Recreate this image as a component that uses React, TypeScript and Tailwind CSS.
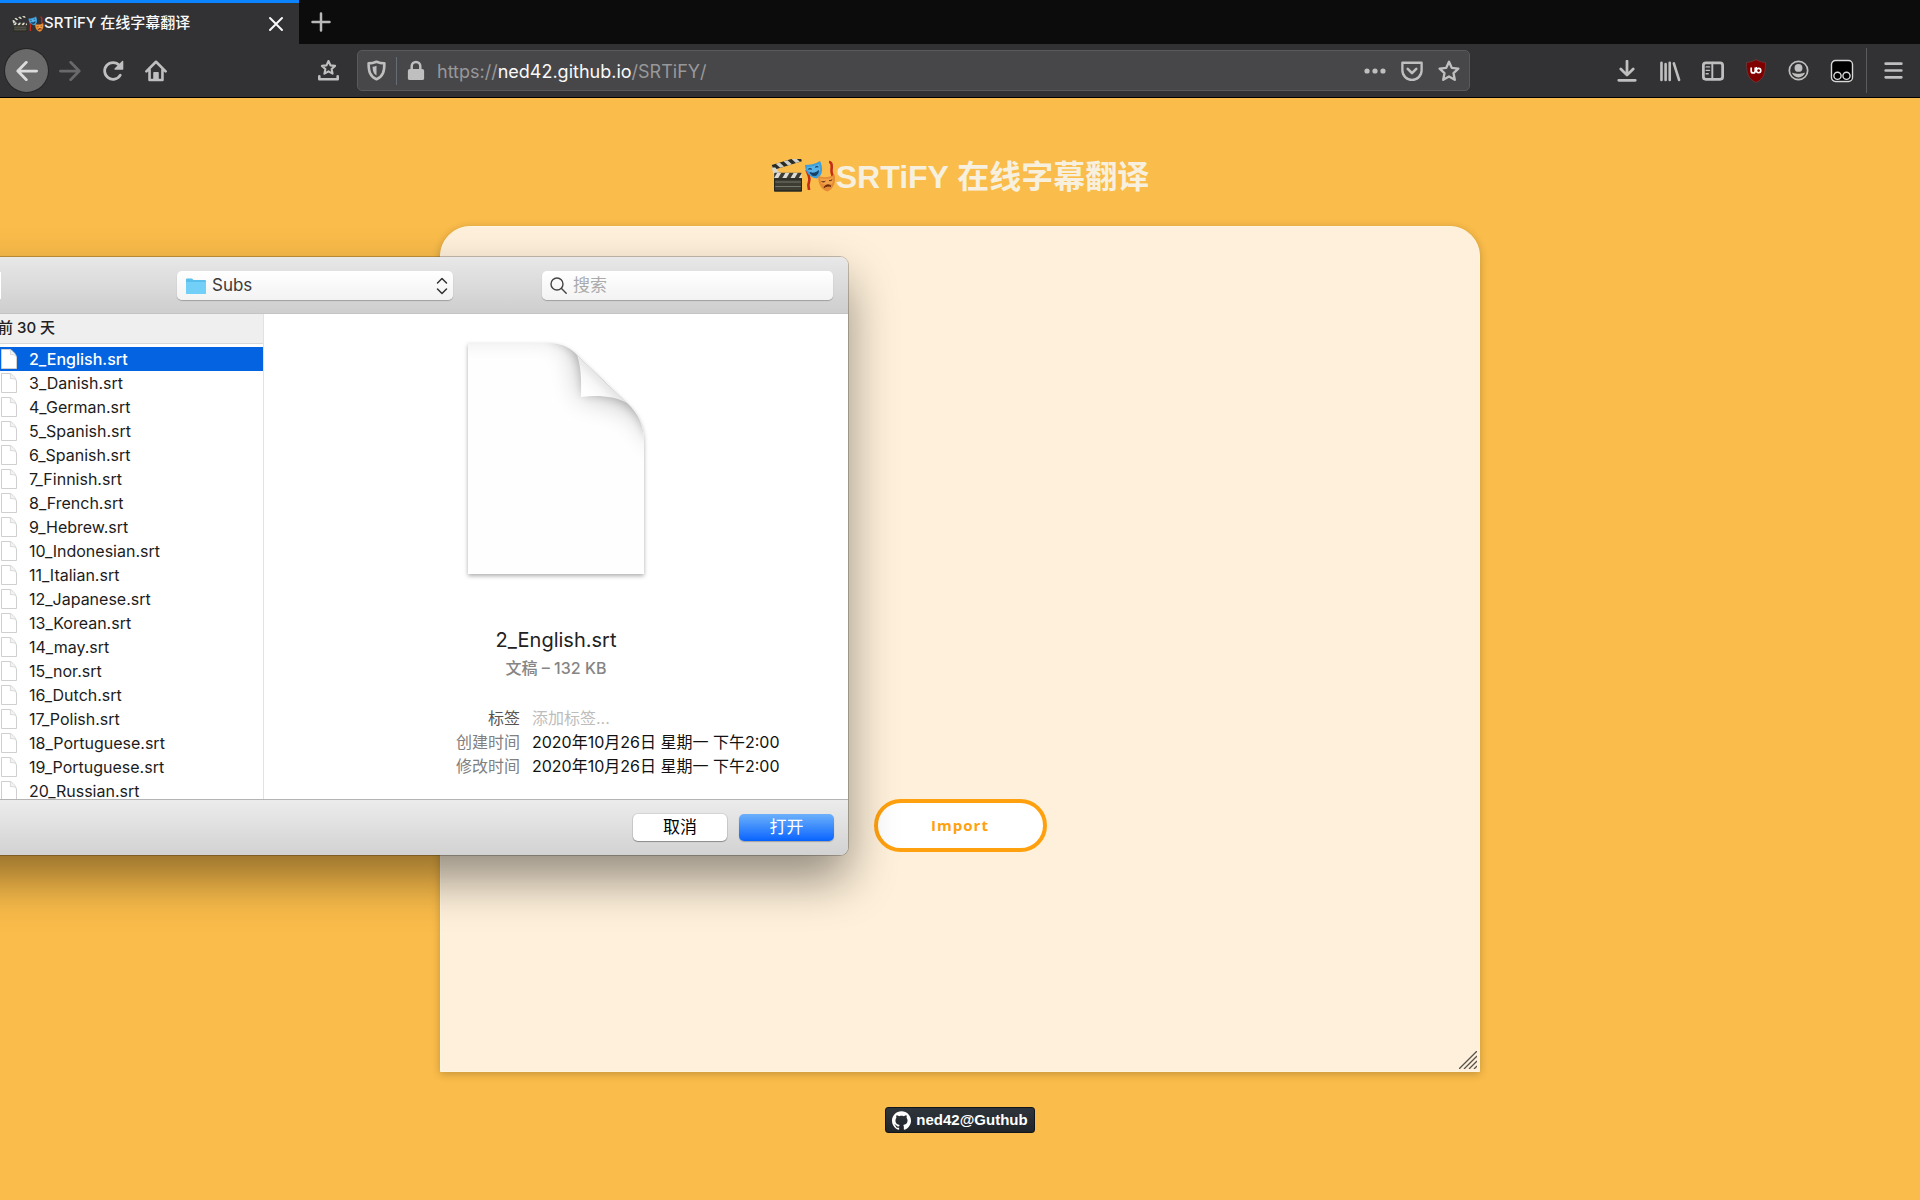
import React from "react";
import { SiGithub } from "react-icons/si";

const FILES = [
  "2_English.srt",
  "3_Danish.srt",
  "4_German.srt",
  "5_Spanish.srt",
  "6_Spanish.srt",
  "7_Finnish.srt",
  "8_French.srt",
  "9_Hebrew.srt",
  "10_Indonesian.srt",
  "11_Italian.srt",
  "12_Japanese.srt",
  "13_Korean.srt",
  "14_may.srt",
  "15_nor.srt",
  "16_Dutch.srt",
  "17_Polish.srt",
  "18_Portuguese.srt",
  "19_Portuguese.srt",
  "20_Russian.srt",
];

function ClapperIcon({ className }: { className: string }) {
  return (
    <svg viewBox="0 0 32 32" className={className} aria-hidden="true">
      <g transform="rotate(-17 2 10)">
        <rect x="2" y="5.6" width="29" height="5" fill="#2b2b26" />
        <path d="M6 5.6h4l3 5H9zM14 5.6h4l3 5h-4zM22 5.6h4l3 5h-4zM2 7l2 3.6H2z" fill="#cfcfc6" />
      </g>
      <path d="M1 9l3-1 4 5-5 4z" fill="#d9d9d2" />
      <rect x="3" y="13.4" width="27" height="18" rx="1" fill="#3d3d34" />
      <path d="M3 18.4l3-5h4l-3 5zM11 18.4l3-5h4l-3 5zM19 18.4l3-5h4l-3 5zM27 18.4l3-5v5z" fill="#dcdcd4" />
      <path d="M4 22.4h25M4 26.6h25" stroke="#77776d" strokeWidth="1" />
      <path d="M3.500 19.400h26v11.500h-26z" fill="none" stroke="#25251f" />
    </svg>
  );
}

function MasksIcon({ className }: { className: string }) {
  return (
    <svg viewBox="0 0 32 32" className={className} aria-hidden="true">
      <path d="M2.500 10c2 5 4 8 2.500 12s0 5 0 8" fill="none" stroke="#c32d17" strokeWidth="2.600" />
      <path d="M25 2c3 0 3 4 2.500 8s2 6 1.500 9" fill="none" stroke="#c32d17" strokeWidth="2.600" />
      <path d="M1 5c5 0 10-1 15-4 3 6 3.500 14-3 17.500C6 18 1 12 1 5z" fill="#3f9fdc" />
      <path d="M3 7c4 0 8-1 12-3 1 3 1.500 5 1 7-5 3-9 2-12 0z" fill="#66c0ef" opacity=".6" />
      <path d="M4 9.500c1-1.500 3-1.500 4 0M11 7.500c1-1.500 3-1.500 3.500-.3M6 12.500c3 1.300 6 .5 8.500-2-.2 3.500-2 5.200-4 5.200S6.600 14.500 6 12.500z" fill="#163f63" stroke="#163f63" strokeWidth=".8" />
      <path d="M14.500 16c5 2 11 1.500 16-1.500 1.500 7-.5 14.500-7 17-6-1.500-10-8-9-15.500z" fill="#e58a35" />
      <path d="M16 18c5 1.500 9 1 13-1 .5 3 0 5-1 7-5 1-8 1-11-1z" fill="#f7ad53" opacity=".7" />
      <path d="M17.500 21.500c1.500.8 2.800.6 3.800-.4M25 20.500c1.200.4 2.600 0 3.300-1M20 27.500c1.500-3 5-3.500 7-1.200-2-.5-5-.1-7 1.200z" fill="#6b2c0c" stroke="#6b2c0c" strokeWidth="1" />
    </svg>
  );
}

function IconButton({ label, children, className = "" }: { label: string; children: React.ReactNode; className?: string }) {
  return (
    <button type="button" aria-label={label} className={`flex h-[43px] w-[43px] shrink-0 items-center justify-center ${className}`}>
      {children}
    </button>
  );
}

/* 16-unit glyph drawn at 21px */
function Glyph({ children, size = "size-[21px]" }: { children: React.ReactNode; size?: string }) {
  return (
    <svg viewBox="0 0 16 16" className={size} fill="none" stroke="currentColor" strokeWidth="2" strokeLinecap="round" strokeLinejoin="round" aria-hidden="true">
      {children}
    </svg>
  );
}

const STAR = "M8 1.300l2 4.400 4.800.6-3.500 3.300.9 4.800L8 12l-4.200 2.400.9-4.800L1.200 6.300 6 5.700z";

function BrowserChrome() {
  return (
    <header className="font-[Inter,'Noto_Sans_CJK_SC',sans-serif]">
      <div className="flex h-[44px] bg-[#0c0c0d]">
        <div className="flex w-[299px] items-center border-t-[3px] border-[#0a84ff] bg-[#323234] pl-3 pr-[15px] text-[#f9f9fa]">
          <ClapperIcon className="size-4" />
          <MasksIcon className="size-4" />
          <span className="flex-1 text-[15px] font-medium">SRTiFY 在线字幕翻译</span>
          <button type="button" aria-label="关闭标签页">
            <svg viewBox="0 0 16 16" className="size-4" stroke="currentColor" strokeWidth="2" strokeLinecap="round" aria-hidden="true">
              <path d="M2 2l12 12M14 2L2 14" />
            </svg>
          </button>
        </div>
        <button type="button" aria-label="新建标签页" className="flex w-[44px] items-center justify-center text-[#b9b9ba]">
          <svg viewBox="0 0 20 20" className="size-5" stroke="currentColor" strokeWidth="2.500" strokeLinecap="round" aria-hidden="true">
            <path d="M10 1.500v17M1.500 10h17" />
          </svg>
        </button>
      </div>

      <div className="flex h-[54px] items-center border-b border-black bg-[#323234] text-[#bfbfc0]">
        <nav aria-label="导航" className="flex w-[350px] shrink-0 pl-[5px]">
          <IconButton label="后退" className="rounded-full bg-[#6a6a6b] text-[#dcdcdc] ring-1 ring-[#252526]">
            <Glyph size="size-[22px]"><path d="M15 8H1.500M7.500 1.700L1.300 8l6.200 6.300" /></Glyph>
          </IconButton>
          <IconButton label="前进" className="text-[#69696b]">
            <Glyph size="size-[22px]"><path d="M1 8h13.500M8.500 1.700L14.700 8l-6.200 6.300" /></Glyph>
          </IconButton>
          <IconButton label="刷新">
            <Glyph size="size-[22px]">
              <path d="M13.300 11A6.100 6.100 0 1 1 12.600 3.900" />
              <path d="M15 1v5.500H9.500z" fill="currentColor" strokeWidth="1" />
            </Glyph>
          </IconButton>
          <IconButton label="主页">
            <Glyph size="size-[22px]">
              <path d="M1 8.300L8 1.300l7 7M3.300 7v7.500h9.400V7" strokeWidth="1.900" />
              <path d="M6.500 14V9.300h3V14z" fill="currentColor" strokeWidth="1" />
            </Glyph>
          </IconButton>
          <IconButton label="书签" className="ml-auto">
            <Glyph>
              <path d="M8 .8l1.500 3.300 3.500.4-2.600 2.400.7 3.500L8 8.700l-3.100 1.700.7-3.500L3 4.500l3.500-.4z" strokeWidth="1.600" />
              <path d="M1 12.500v2.200h14v-2.200" />
            </Glyph>
          </IconButton>
        </nav>

        <div className="ml-[7px] mr-[135px] flex h-[41px] min-w-0 flex-1 items-center rounded-[5px] border border-[#5a5a5c] bg-[#474749] pl-[8px] pr-[2px]">
          <Glyph>
            <path d="M8 1.300c2 .9 4 1.300 6 1.300 0 6-1 10-6 12-5-2-6-6-6-12 2 0 4-.4 6-1.300z" />
            <path d="M8 4.300c-1 .5-2 .7-3 .8.200 3.600.9 5.400 3 6.700z" fill="currentColor" stroke="none" />
          </Glyph>
          <span className="ml-[9px] h-[28px] w-px bg-[#646c74]" />
          <svg viewBox="0 0 20 22" className="ml-[9px] h-[21px] w-5" aria-hidden="true">
            <path d="M5.500 11V6.500a4.500 4.500 0 0 1 9 0V11" fill="none" stroke="currentColor" strokeWidth="2.600" />
            <rect x="1.500" y="9.500" width="17" height="11.500" rx="2" fill="currentColor" />
          </svg>
          <a href="https://ned42.github.io/SRTiFY/" className="ml-[11px] flex-1 pt-[2px] text-[18px] text-[#98989a]">
            https://<span className="text-[#f9f9fa]">ned42.github.io</span>/SRTiFY/
          </a>
          <button type="button" aria-label="页面操作" className="flex w-[37px] justify-center">
            <Glyph size="size-[22px]">
              <g fill="currentColor" stroke="none"><circle cx="2.200" cy="8" r="1.900" /><circle cx="8" cy="8" r="1.900" /><circle cx="13.800" cy="8" r="1.900" /></g>
            </Glyph>
          </button>
          <button type="button" aria-label="保存到 Pocket" className="flex w-[37px] justify-center">
            <Glyph size="size-[22px]">
              <path d="M1 2h14v5.500a7 7 0 0 1-14 0z" strokeWidth="1.700" />
              <path d="M4.900 6.500L8 9.600l3.100-3.100" strokeWidth="1.900" />
            </Glyph>
          </button>
          <button type="button" aria-label="加入书签" className="flex w-[37px] justify-center">
            <Glyph size="size-[22px]"><path d={STAR} strokeWidth="1.700" /></Glyph>
          </button>
        </div>

        <div className="flex shrink-0 items-center">
          <IconButton label="下载">
            <Glyph size="size-[22px]"><path d="M8 .800v9.500M3.500 6.500L8 11l4.500-4.500M2 14.800h12" /></Glyph>
          </IconButton>
          <IconButton label="我的足迹">
            <Glyph size="size-[22px]"><path d="M1.800 2v12.500M4.800 3v11.500M7.800 2v12.500M10.800 2.500l3.800 12" strokeWidth="1.900" /></Glyph>
          </IconButton>
          <IconButton label="侧栏">
            <Glyph size="size-[22px]">
              <rect x="1" y="2" width="14" height="12" rx="1.800" />
              <path d="M7.500 2v12" strokeWidth="1.400" />
              <path d="M3 5h2.500M3 7.500h2.500M3 10h1.500" strokeWidth="1" />
            </Glyph>
          </IconButton>
          <IconButton label="uBlock Origin">
            <svg viewBox="0 0 20 24" className="h-6 w-5" aria-hidden="true">
              <path d="M10 .5c3 1.800 6 2.700 9.500 3C19.500 14 18 20 10 23.500 2 20 .5 14 .5 3.500 4 3.200 7 2.300 10 .5z" fill="#800000" stroke="#6d4242" strokeWidth=".7" />
              <path d="M5.200 8.500V12a2 2 0 0 0 4 0V8.500" fill="none" stroke="#fff" strokeWidth="1.700" />
              <circle cx="12.600" cy="11.600" r="2.200" fill="none" stroke="#fff" strokeWidth="1.600" />
              <path d="M10.400 8v4" stroke="#fff" strokeWidth="1.300" />
            </svg>
          </IconButton>
          <IconButton label="账户">
            <Glyph>
              <circle cx="8" cy="8" r="7" strokeWidth="1.300" />
              <circle cx="8" cy="6" r="3" fill="currentColor" stroke="none" />
              <path d="M3 9.800c1.200 0 1.800.7 5 .7s3.800-.7 5-.7c-.7 2-2.700 3.600-5 3.600S3.700 11.800 3 9.800z" fill="currentColor" stroke="none" />
            </Glyph>
          </IconButton>
          <IconButton label="Tampermonkey">
            <svg viewBox="0 0 24 24" className="size-6" fill="none" stroke="#d8d8d8" strokeWidth="1.400" aria-hidden="true">
              <rect x="1.500" y="1.500" width="21" height="21" rx="4" fill="#000" />
              <circle cx="7.500" cy="16.800" r="3.600" />
              <circle cx="16.500" cy="16.800" r="3.600" />
            </svg>
          </IconButton>
          <span className="ml-[3px] h-[45px] w-px bg-[#5b5b5d]" />
          <button type="button" aria-label="打开菜单" className="flex w-[53px] justify-center">
            <Glyph><path d="M2 2.800h12M2 8h12M2 13.200h12" /></Glyph>
          </button>
        </div>
      </div>
    </header>
  );
}

function SmallFileIcon() {
  return (
    <svg viewBox="0 0 16 20" className="h-5 w-4 shrink-0" aria-hidden="true">
      <path d="M.5.500h9C13 3 15.500 6 15.500 9v10.500H.5z" fill="#fff" stroke="#cfcfcf" />
      <path d="M9 .800c.6 1.500.5 3 .3 4.700 2 0 4 .2 5.300 1.200" fill="#f1f1f1" stroke="#cfcfcf" strokeWidth=".8" />
    </svg>
  );
}

const PAGE_OUTLINE = "M0 0H80C94 0 103 5 109 12L159 60C170 70 176 82 176 100V231H0Z";

function LargeFileIcon() {
  return (
    <svg viewBox="0 0 176 231" className="h-[231px] w-[176px] overflow-visible" aria-hidden="true">
      <defs>
        <clipPath id="pageClip">
          <path d={PAGE_OUTLINE} />
        </clipPath>
        <linearGradient id="flap" gradientUnits="userSpaceOnUse" x1="134" y1="34" x2="118" y2="50">
          <stop offset="0" stopColor="#e2e2e2" />
          <stop offset=".5" stopColor="#f8f8f8" />
          <stop offset="1" stopColor="#fff" />
        </linearGradient>
        <filter id="pageShadow" x="-10%" y="-10%" width="120%" height="120%">
          <feDropShadow dx="0" dy="2" stdDeviation="2" floodColor="#000" floodOpacity=".32" />
        </filter>
        <filter id="softWide" x="-50%" y="-50%" width="200%" height="200%">
          <feGaussianBlur stdDeviation="14" />
        </filter>
        <filter id="softNarrow" x="-50%" y="-50%" width="200%" height="200%">
          <feGaussianBlur stdDeviation="5" />
        </filter>
      </defs>
      <path d={PAGE_OUTLINE} fill="#fefefe" filter="url(#pageShadow)" />
      <g clipPath="url(#pageClip)">
        <path d="M-60 -12H80C108 -12 112 20 113 54C145 52 180 66 190 104L230 60V-50H-60Z" fill="#000" opacity=".24" filter="url(#softWide)" />
        <path d="M80 -4C108 0 114 20 115 52C145 50 170 60 180 96L200 40L120 -20Z" fill="#000" opacity=".2" filter="url(#softNarrow)" />
      </g>
      <path d="M109 12C113 24 113.500 36 113 54C130 52 146 53 159 60Z" fill="url(#flap)" />
    </svg>
  );
}

function FileDialog() {
  return (
    <section
      role="dialog"
      aria-label="打开文件"
      className="absolute -left-16 top-[159px] w-[912px] rounded-[8px] pl-16 font-[Inter,'Noto_Sans_CJK_SC',sans-serif] shadow-[0_0_0_1px_rgba(0,0,0,0.22),0_24px_48px_rgba(0,0,0,0.42)]"
    >
      <div className="flex h-[57px] items-center rounded-tr-[8px] border-b border-[#c4c4c4] bg-gradient-to-b from-[#e8e8e8] to-[#cecece] pr-[15px]">
        <span className="h-[27px] w-px bg-white" />
        <div className="relative ml-[176px] w-[276px]">
          <svg viewBox="0 0 20 16" className="pointer-events-none absolute left-[9px] top-[7px] h-4 w-5" aria-hidden="true">
            <path d="M0 1.500Q0 .500 1 .500h5L7.500 2H19q1 0 1 1v12q0 1-1 1H1q-1 0-1-1z" fill="#5bbfee" />
            <path d="M0 4h20v11q0 1-1 1H1q-1 0-1-1z" fill="#72d0f8" />
          </svg>
          <select
            aria-label="文件夹"
            className="block h-[29px] w-full appearance-none rounded-[5px] bg-gradient-to-b from-white to-[#f3f3f3] pl-[35px] pt-[2px] text-[17px] text-[#3c3c3c] shadow-[0_1px_1px_rgba(0,0,0,0.25)]"
          >
            <option>Subs</option>
          </select>
          <svg viewBox="0 0 12 18" className="pointer-events-none absolute right-[5px] top-[6px] h-[18px] w-3" fill="none" stroke="#333" strokeWidth="1.500" strokeLinecap="round" strokeLinejoin="round" aria-hidden="true">
            <path d="M1.500 6L6 1.500 10.500 6M1.500 12L6 16.500l4.500-4.500" />
          </svg>
        </div>
        <label className="ml-auto flex h-[29px] w-[291px] items-center gap-[6px] rounded-[5px] bg-gradient-to-b from-white to-[#f3f3f3] px-2 shadow-[0_1px_1px_rgba(0,0,0,0.25)]">
          <svg viewBox="0 0 17 17" className="size-[17px] shrink-0" fill="none" stroke="#444" strokeWidth="1.400" strokeLinecap="round" aria-hidden="true">
            <circle cx="7" cy="7" r="6" />
            <path d="M11.500 11.500l4.700 4.700" />
          </svg>
          <input type="search" aria-label="搜索" placeholder="搜索" className="w-full min-w-0 bg-transparent pt-[2px] text-[17px] outline-none placeholder:text-[#ababab]" />
        </label>
      </div>

      <div className="flex h-[485px] bg-white">
        <div className="w-[264px] shrink-0 overflow-hidden border-r border-[#e2e2e2]">
          <h2 className="-ml-[2px] h-[30px] border-b border-[#d8d8d8] bg-[#efefef] text-[15px] font-medium leading-[28px] text-[#222]">
            前 30 天
          </h2>
          <ul className="pt-[3px] text-[16px]">
            {FILES.map((name, i) => (
              <li key={name}>
                <button
                  type="button"
                  aria-pressed={i === 0}
                  className={`flex h-6 w-full items-center gap-[12px] pl-px text-left ${i === 0 ? "bg-[#0363e1] font-medium text-white" : "text-[#1c1c1c]"}`}
                >
                  <SmallFileIcon />
                  {name}
                </button>
              </li>
            ))}
          </ul>
        </div>

        <div className="flex flex-1 flex-col items-center pt-[29px]">
          <LargeFileIcon />
          <h3 className="mt-[52px] text-[20px] leading-7 text-[#222]">2_English.srt</h3>
          <p className="mt-[2px] text-[16px] font-medium leading-6 text-[#858585]">文稿 – 132 KB</p>
          <dl className="mt-[26px] grid w-full grid-cols-[256px_1fr] gap-x-[12px] text-[16px] leading-6 text-[#111]">
            <dt className="text-right text-[#555]">
              <label htmlFor="tags">标签</label>
            </dt>
            <dd className="flex">
              <input id="tags" placeholder="添加标签..." className="h-6 w-full bg-transparent outline-none placeholder:text-[#bdbdbd]" />
            </dd>
            <dt className="text-right text-[#808080]">创建时间</dt>
            <dd>2020年10月26日 星期一 下午2:00</dd>
            <dt className="text-right text-[#808080]">修改时间</dt>
            <dd>2020年10月26日 星期一 下午2:00</dd>
          </dl>
        </div>
      </div>

      <div className="flex h-[56px] items-center justify-end gap-3 rounded-br-[8px] border-t border-[#b4b4b4] bg-gradient-to-b from-[#ececec] to-[#d2d2d2] pr-[14px] text-[17px]">
        <button type="button" className="h-[27px] w-[94px] rounded-[5px] bg-white leading-[27px] text-black shadow-[0_0_0_1px_rgba(0,0,0,0.08),0_1px_1px_rgba(0,0,0,0.3)]">
          取消
        </button>
        <button type="button" className="h-[27px] w-[95px] rounded-[5px] bg-gradient-to-b from-[#6cb0fb] via-[#3a8afc] to-[#0562ff] leading-[27px] text-white shadow-[0_1px_1px_rgba(0,0,0,0.25)]">
          打开
        </button>
      </div>
    </section>
  );
}

export default function App() {
  return (
    <div className="flex min-h-screen flex-col bg-[#fabc4a]">
      <BrowserChrome />
      <main className="relative flex flex-1 flex-col items-center overflow-hidden pt-[59px]">
        <h1 className="flex h-10 items-center font-['Liberation_Sans','Noto_Sans_CJK_SC',sans-serif] text-[32px] font-bold leading-10 text-[#f8f0df]">
          <ClapperIcon className="mb-[3px] size-[33px]" />
          <MasksIcon className="mb-[3px] size-[32px]" />
          <span>SRTiFY 在线字幕翻译</span>
        </h1>

        <div className="mt-[29px] grid w-full max-w-[1040px] grid-cols-1">
          <textarea
            aria-label="字幕"
            className="col-start-1 row-start-1 block h-[846px] w-full resize-none rounded-t-[30px] border border-[#fff6e2] bg-[#fef0da] p-6 shadow-[0_2px_8px_rgba(0,0,0,0.22)] outline-none"
          />
          <svg viewBox="0 0 18 18" className="pointer-events-none col-start-1 row-start-1 mb-[3px] mr-[3px] size-[18px] self-end justify-self-end" stroke="#55524c" strokeWidth="1.300" aria-hidden="true">
            <path d="M0 18L18 0M5 18L18 5M10 18l8-8M15 18l3-3" />
          </svg>
          <button
            type="button"
            className="col-start-1 row-start-1 mb-[220px] h-[53px] w-[173px] self-end justify-self-center rounded-full border-4 border-[#ffa10f] bg-white font-['Open_Sans',sans-serif] text-[15px] font-bold tracking-[1px] text-[#ffa10f]"
          >
            Import
          </button>
        </div>

        <a
          href="https://github.com/ned42"
          className="mt-[35px] flex h-[26px] items-center gap-[5px] rounded-[3px] border border-[#11151c] bg-gradient-to-b from-[#2f353c] to-[#20252a] px-[6px] font-['Liberation_Sans',sans-serif] text-[15px] font-bold text-white"
        >
          <SiGithub className="size-[19px]" aria-hidden="true" />
          ned42@Guthub
        </a>

        <FileDialog />
      </main>
    </div>
  );
}
